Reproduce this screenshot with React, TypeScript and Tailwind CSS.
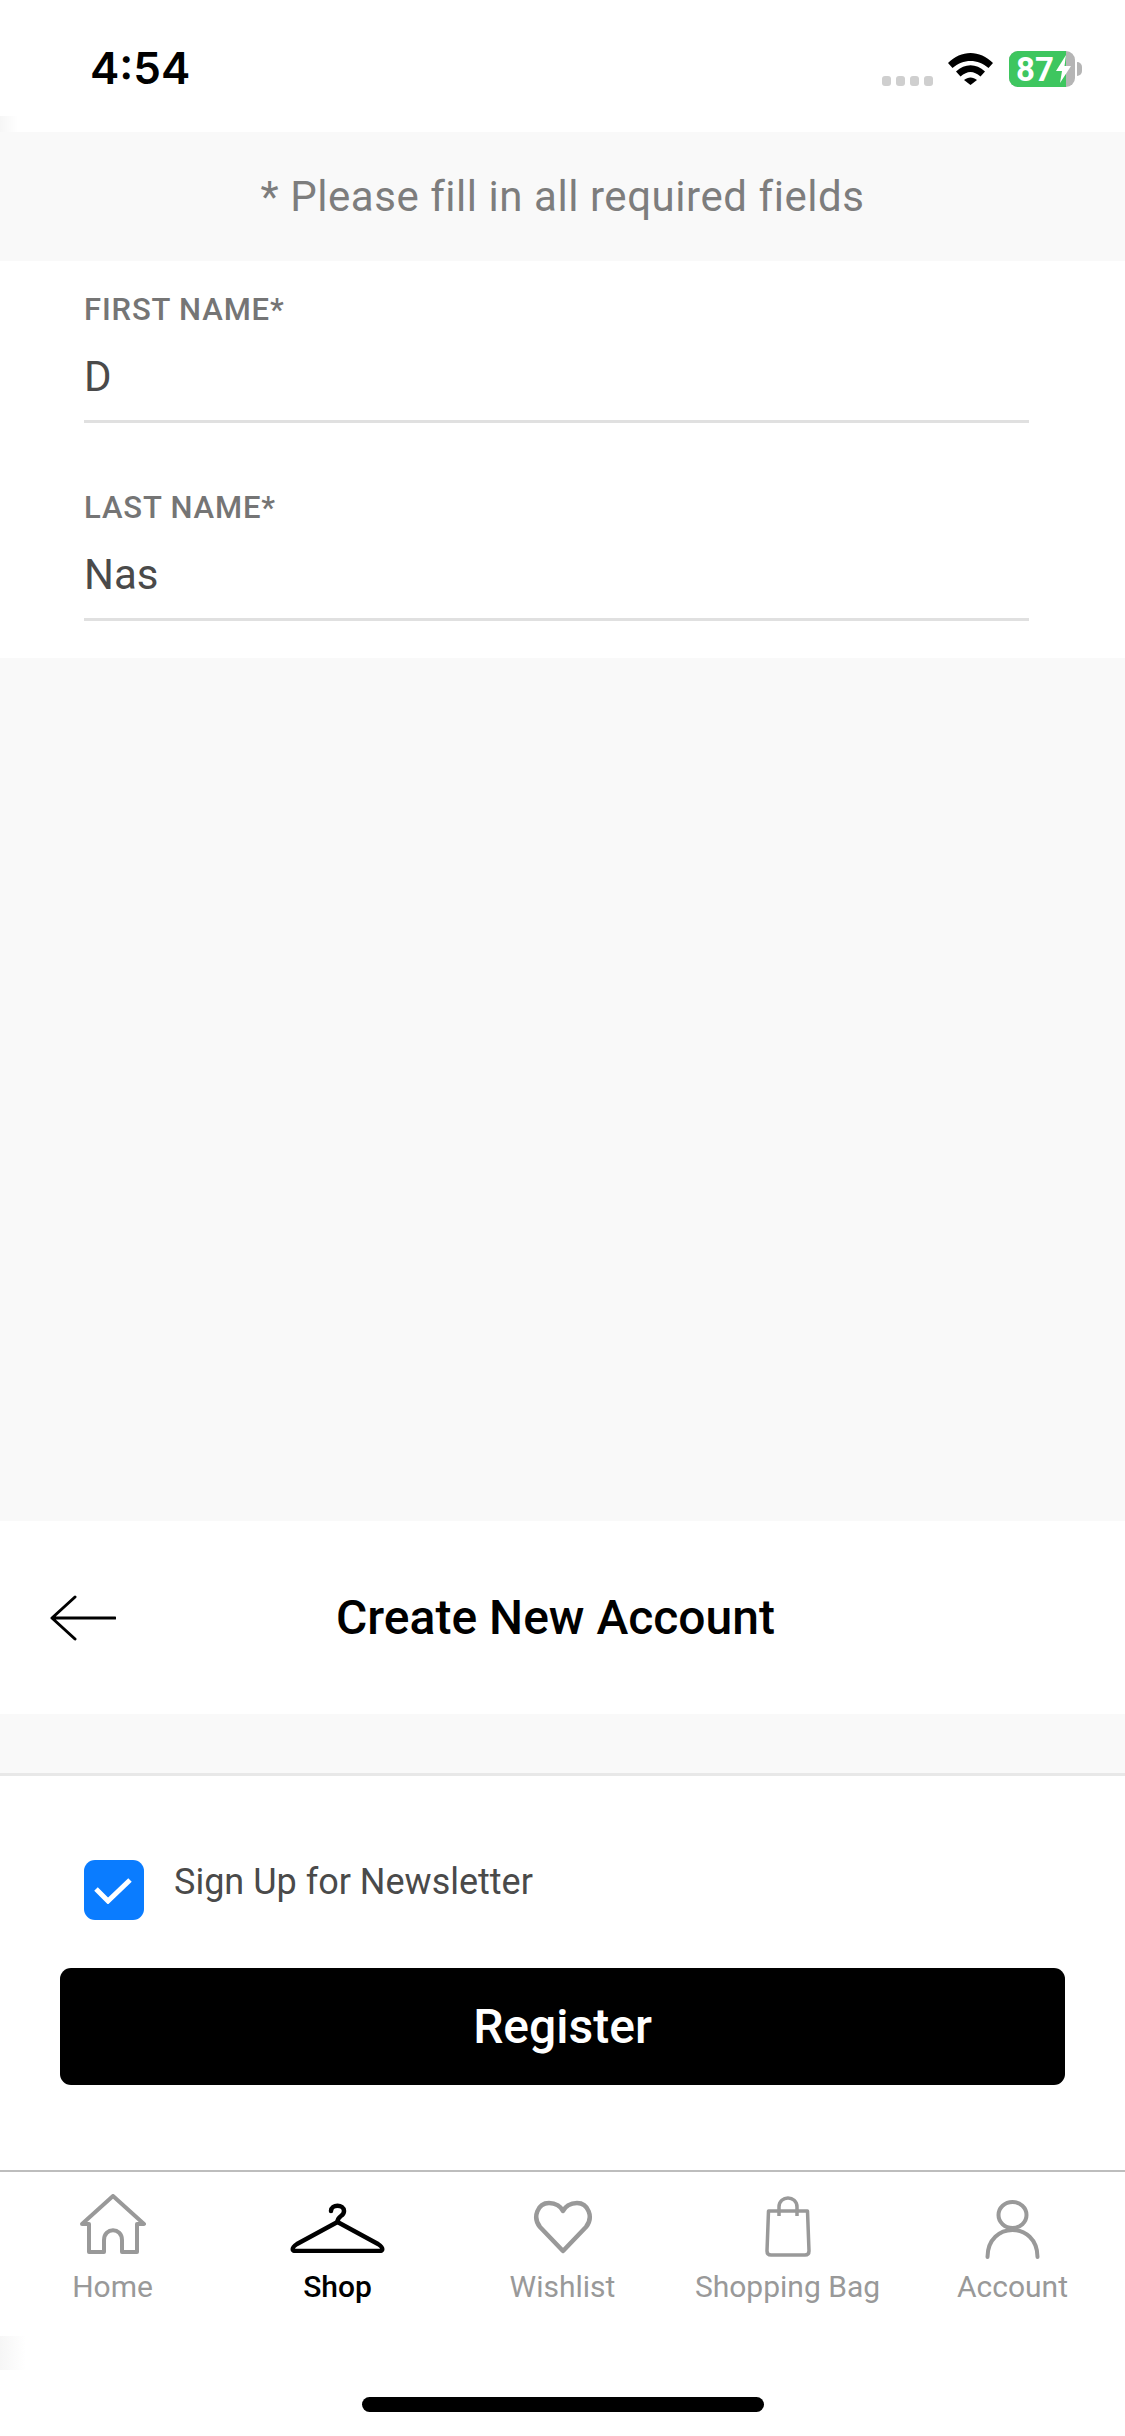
const roboto = "font-['Roboto',sans-serif]";

function StatusBar() {
  return (
    <div className="relative flex h-[132px] items-start justify-between bg-white pl-[90px] pr-[43px]">
      <span className="mt-[44px] font-['Inter',sans-serif] text-[44px] font-semibold leading-[48px] text-black">
        4:54
      </span>
      <div className="mt-[51px] flex items-start">
        <div className="mt-[25px] flex gap-[4.5px]">
          <span className="h-[9.5px] w-[9.5px] rounded-[3px] bg-[#cfcfcf]" />
          <span className="h-[9.5px] w-[9.5px] rounded-[3px] bg-[#cfcfcf]" />
          <span className="h-[9.5px] w-[9.5px] rounded-[3px] bg-[#cfcfcf]" />
          <span className="h-[9.5px] w-[9.5px] rounded-[3px] bg-[#cfcfcf]" />
        </div>
        <svg className="ml-[15px] mt-[1px]" width="45" height="33" viewBox="0 0 45 33">
          <path d="M0 11C13-2.500 32-2.500 45 11L40.500 16C30 6.500 15 6.500 4.500 16Z" fill="#000" />
          <path d="M8 19.500C17 11 28 11 37 19.500L32.500 24.500C25.500 18.500 19.500 18.500 12.500 24.500Z" fill="#000" />
          <path d="M16 28C20 24.500 25 24.500 29 28L22.500 33Z" fill="#000" />
        </svg>
        <div className="relative ml-[16px] flex h-[36px] w-[66px] items-center overflow-hidden rounded-[9px] bg-[#b5b5b5]">
          <div className="flex h-full w-[57px] items-center bg-[#3ec65f] pl-[7px]">
            <span className="text-[33px] font-bold leading-none text-white">87</span>
          </div>
          <svg className="absolute left-[47px] top-[4px]" width="15" height="28" viewBox="0 0 15 28">
            <path d="M10 0L0 16H6L4 28L15 11H8.500Z" fill="#fff" />
          </svg>
        </div>
        <span className="ml-[2px] mt-[11px] h-[14px] w-[5px] rounded-r-[5px] bg-[#b5b5b5]" />
      </div>
      <div className="absolute bottom-0 left-0 h-[16px] w-[18px] bg-gradient-to-r from-[#f6f6f6] to-white" />
    </div>
  );
}

function Field({ label, value, className }: { label: string; value: string; className?: string }) {
  return (
    <div className={className}>
      <div className="text-[31px] font-medium leading-[36px] tracking-[0.85px] text-[#757575]">{label}</div>
      <div className="mt-[24px] text-[42px] leading-[50px] text-[#4a4a4a]">{value}</div>
      <div className="mt-[18px] h-[3px] bg-[#e0e0e0]" />
    </div>
  );
}

function HomeIcon() {
  return (
    <svg className="mb-[5px]" width="66" height="60" viewBox="0 0 66 60" fill="none" stroke="#999" strokeWidth="4" strokeLinejoin="round">
      <path d="M33 2L64 30H57V58H42V46C42 33 24 33 24 46V58H9V30H2Z" />
    </svg>
  );
}

function HangerIcon() {
  return (
    <svg className="mb-[6px]" width="97" height="50" viewBox="-1 0 97 50" fill="none" stroke="#000" strokeWidth="4.500" strokeLinecap="round" strokeLinejoin="round">
      <path d="M41 8C41 1 54 1 54 8C54 14 47.500 12 47.500 19" />
      <path d="M47.500 19L88 41C94 45 93 48 89 48H6C2 48 1 45 7 41Z" />
    </svg>
  );
}

function HeartIcon() {
  return (
    <svg className="mb-[5px]" width="60" height="54" viewBox="0 0 60 54" fill="none" stroke="#999" strokeWidth="4.500" strokeLinejoin="round">
      <path d="M30 51L7 27C-1 17 5 3 16 3C23 3 28 7 30 11C32 7 37 3 44 3C55 3 61 17 53 27Z" />
    </svg>
  );
}

function BagIcon() {
  return (
    <svg className="mb-[2px]" width="46" height="61" viewBox="0 0 46 61" fill="none" stroke="#999" strokeWidth="3.500" strokeLinejoin="round">
      <path d="M3.500 15H42.500L44 55C44 58 42 59 40 59H6C4 59 2 58 2 55Z" />
      <path d="M14 20V11C14-1 32-1 32 11V20" />
    </svg>
  );
}

function PersonIcon() {
  return (
    <svg width="55" height="59" viewBox="0 0 55 59" fill="none" stroke="#999" strokeWidth="4" strokeLinecap="round">
      <ellipse cx="27.500" cy="15" rx="14" ry="13" />
      <path d="M2.500 57C2.500 21 52.500 21 52.500 57" />
    </svg>
  );
}

const tabs = [
  { label: "Home", icon: <HomeIcon /> },
  { label: "Shop", icon: <HangerIcon />, active: true },
  { label: "Wishlist", icon: <HeartIcon /> },
  { label: "Shopping Bag", icon: <BagIcon /> },
  { label: "Account", icon: <PersonIcon /> },
];

export default function App() {
  return (
    <div className={`flex h-[2436px] w-[1125px] flex-col overflow-hidden bg-[#f9f9f9] ${roboto}`}>
      <StatusBar />

      <div className="flex h-[129px] items-center justify-center text-[42px] tracking-[0.55px] text-[#7d7d7d]">
        * Please fill in all required fields
      </div>

      <div className="h-[397px] bg-white pl-[84px] pr-[96px] pt-[31px]">
        <Field label="FIRST NAME*" value="D" />
        <Field label="LAST NAME*" value="Nas" className="mt-[67px]" />
      </div>

      <div className="flex-1" />

      <div className="flex h-[193px] items-center bg-white pl-[50px]">
        <svg width="66" height="46" viewBox="0 0 66 46" fill="none" stroke="#000" strokeWidth="3" strokeLinecap="round" strokeLinejoin="round">
          <path d="M65 23H2M25 2L2 23L25 44" />
        </svg>
        <div className="ml-[220px] text-[48px] font-medium leading-none text-black">Create New Account</div>
      </div>

      <div className="h-[59px]" />

      <div className="h-[397px] border-t-[3px] border-[#e8e8e8] bg-white">
        <div className="flex items-start pl-[84px] pt-[84px]">
          <div className="flex h-[60px] w-[60px] items-center justify-center rounded-[11px] bg-[#0a7cff] pr-[3px]">
            <svg width="38" height="27" viewBox="0 0 38 27" fill="none" stroke="#fff" strokeWidth="5">
              <path d="M2 12L14 24L36 3" />
            </svg>
          </div>
          <span className="ml-[30px] text-[36px] leading-[44px] text-[#4a4a4a]">Sign Up for Newsletter</span>
        </div>
        <button className="mx-[60px] mt-[48px] flex h-[117px] w-[1005px] items-center justify-center rounded-[11px] bg-black text-[48px] font-medium text-white">
          Register
        </button>
      </div>

      <div className="relative h-[266px] border-t-[2px] border-[#bdbdbd] bg-white">
        <div className="flex">
          {tabs.map((tab) => (
            <div key={tab.label} className="flex w-[225px] flex-col items-center">
              <div className="flex h-[87px] items-end justify-center">{tab.icon}</div>
              <span className={`mt-[8px] text-[30px] leading-[40px] ${tab.active ? "font-medium text-black" : "text-[#999]"}`}>
                {tab.label}
              </span>
            </div>
          ))}
        </div>
        <div className="mx-auto mt-[90px] h-[15px] w-[402px] rounded-full bg-black" />
        <div className="absolute left-0 top-[164px] h-[34px] w-[26px] bg-gradient-to-r from-[#f6f6f6] to-white" />
      </div>
    </div>
  );
}
